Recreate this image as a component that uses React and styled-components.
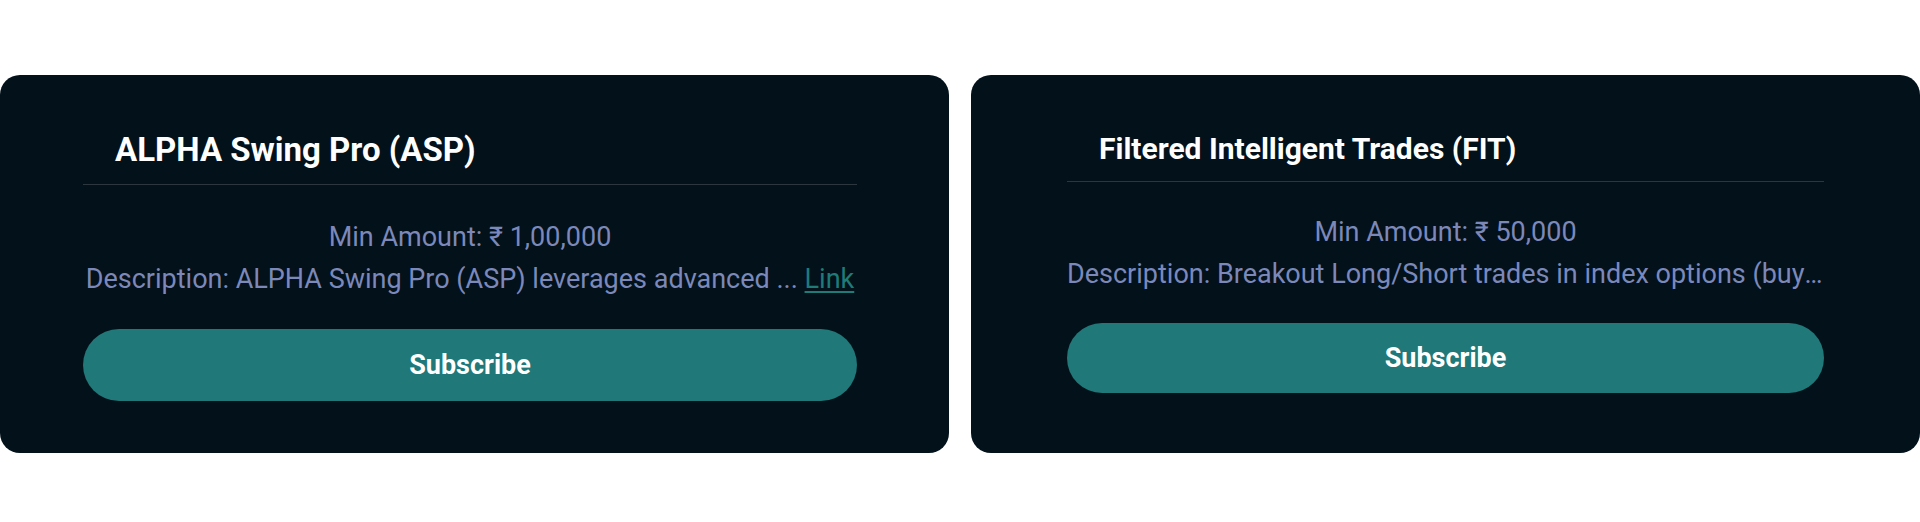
import React from "react";
import styled, { createGlobalStyle } from "styled-components";

const Global = createGlobalStyle`
  html, body { margin: 0; padding: 0; background: #ffffff; }
  body { font-family: Roboto, "Noto Sans", "Liberation Sans", sans-serif; }
  * { box-sizing: border-box; }
`;

const Page = styled.main`
  width: 1920px;
  height: 522px;
  padding-top: 75px;
  display: flex;
  gap: 22px;
`;

const Card = styled.section`
  flex: 0 0 949px;
  height: 378px;
  background: #02111a;
  border-radius: 20px;
  padding: ${(p) => p.$pt}px 0 0 ${(p) => p.$pl}px;
  display: flex;
  flex-direction: column;
`;

const Inner = styled.div`
  width: ${(p) => p.$w}px;
  display: flex;
  flex-direction: column;
`;

const Title = styled.h3`
  margin: 0;
  padding: 0 0 ${(p) => p.$pb}px 32px;
  border-bottom: 1px solid #2b363d;
  color: #ffffff;
  font-weight: 700;
  font-size: ${(p) => p.$fs}px;
  line-height: 36px;
`;

const Info = styled.div`
  margin-top: ${(p) => p.$mt}px;
  color: #7c88b9;
  font-size: 27px;
  line-height: 42px;
  text-align: center;
`;

const Line = styled.div`
  white-space: nowrap;
  overflow: hidden;
  text-overflow: ellipsis;
`;

const LinkText = styled.a`
  color: #1f7a78;
  text-decoration: underline;
  text-underline-offset: 3px;
  cursor: pointer;
`;

const Button = styled.button`
  margin-top: ${(p) => p.$mt}px;
  height: ${(p) => p.$h}px;
  border: none;
  border-radius: 999px;
  background: #207878;
  color: #ffffff;
  font-family: Roboto, "Noto Sans", sans-serif;
  font-weight: 700;
  font-size: 27px;
  cursor: pointer;
`;

export default function App() {
  return (
    <>
      <Global />
      <Page>
        <Card $pt={57} $pl={83}>
          <Inner $w={774}>
            <Title $fs={33} $pb={16}>ALPHA Swing Pro (ASP)</Title>
            <Info $mt={31}>
              <Line>Min Amount: ₹ 1,00,000</Line>
              <Line>
                Description: ALPHA Swing Pro (ASP) leverages advanced ...{" "}
                <LinkText>Link</LinkText>
              </Line>
            </Info>
            <Button $mt={29} $h={72}>Subscribe</Button>
          </Inner>
        </Card>
        <Card $pt={56} $pl={96}>
          <Inner $w={757}>
            <Title $fs={30} $pb={14}>Filtered Intelligent Trades (FIT)</Title>
            <Info $mt={29}>
              <Line>Min Amount: ₹ 50,000</Line>
              <Line>
                Description: Breakout Long/Short trades in index options (buying) with a filtered approach
              </Line>
            </Info>
            <Button $mt={28} $h={70}>Subscribe</Button>
          </Inner>
        </Card>
      </Page>
    </>
  );
}
